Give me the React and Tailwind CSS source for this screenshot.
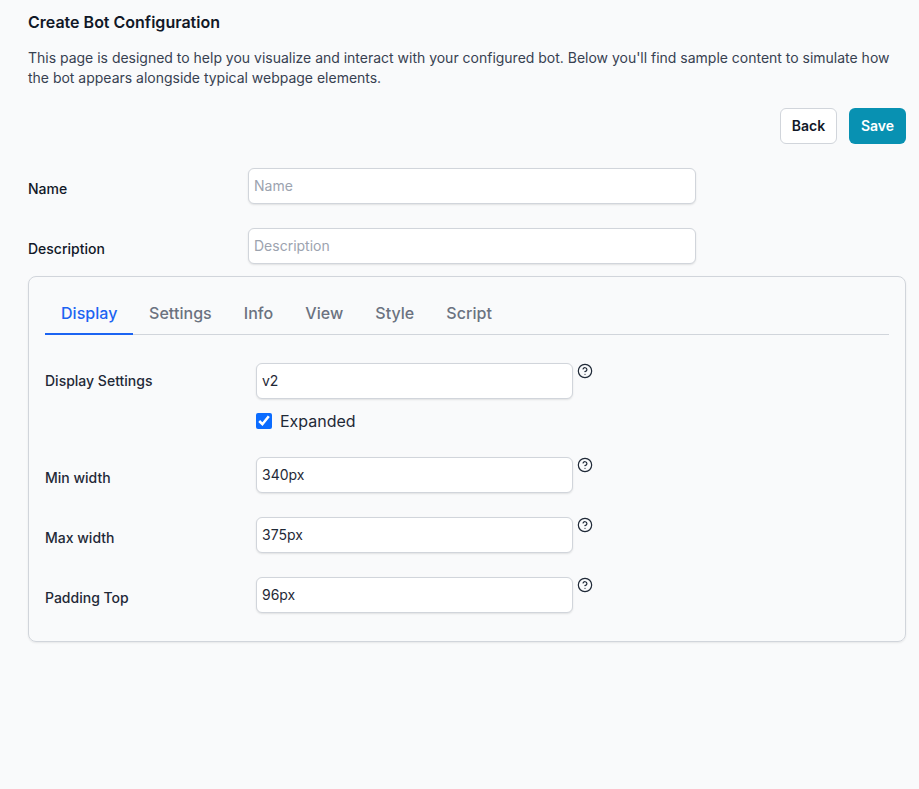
import React from "react";

function Help() {
  return (
    <svg className="ml-[4px] shrink-0 text-[#1f2937]" width="16" height="16" viewBox="0 0 24 24" fill="none" stroke="currentColor" strokeWidth="1.8" strokeLinecap="round" strokeLinejoin="round">
      <circle cx="12" cy="12" r="10" />
      <path d="M9.1 9a3 3 0 0 1 5.8 1c0 2-3 3-3 3" />
      <path d="M12 17h.01" />
    </svg>
  );
}

const inputCls = "block h-9 rounded-md border border-[#d1d5db] bg-white pl-[5px] pr-[5px] pb-[2px] text-sm text-[#1f2937] placeholder:text-[#9ca3af] shadow-[0_1px_2px_rgba(0,0,0,0.1)] outline-none";

function Row({ label, value, className = "", labelClass = "pt-[11px]", children }) {
  return (
    <div className={"flex items-start " + className}>
      <label className={"w-[211px] shrink-0 text-sm leading-5 font-medium text-[#1f2937] " + labelClass}>{label}</label>
      <div>
        <div className="flex items-start">
          <input className={inputCls + " w-[317px]"} defaultValue={value} />
          <Help />
        </div>
        {children}
      </div>
    </div>
  );
}

const tabs = ["Display", "Settings", "Info", "View", "Style", "Script"];

export default function App() {
  return (
    <div className="min-h-[789px] bg-[#f9fafb] pl-[28px] pr-[13px] pt-[12px] font-['Inter',sans-serif]">
      <h1 className="text-base leading-5 font-semibold text-[#111827]">Create Bot Configuration</h1>
      <p className="mt-[16px] text-sm leading-5 tracking-[-0.01px] text-[#374151]">
        This page is designed to help you visualize and interact with your configured bot. Below you'll find sample content to simulate how the bot appears alongside typical webpage elements.
      </p>
      <div className="mt-[20px] flex justify-end gap-3">
        <button className="h-9 w-[57px] rounded-md border border-[#d1d5db] bg-white text-sm font-semibold text-[#111827]">Back</button>
        <button className="h-9 w-[57px] rounded-md bg-[#0891b2] text-sm font-semibold text-white">Save</button>
      </div>
      <div className="mt-[24px] flex items-start">
        <label className="w-[220px] shrink-0 pt-[11px] text-sm leading-5 font-medium text-[#111827]">Name</label>
        <input className={inputCls + " w-[448px]"} placeholder="Name" />
      </div>
      <div className="mt-[24px] flex items-start">
        <label className="w-[220px] shrink-0 pt-[11px] text-sm leading-5 font-medium text-[#111827]">Description</label>
        <input className={inputCls + " w-[448px]"} placeholder="Description" />
      </div>
      <div className="mt-[12px] h-[366px] rounded-lg border border-[#d1d5db] px-4 pt-[16px] shadow-[0_1px_2px_rgba(0,0,0,0.08)]">
        <div className="flex border-b border-[#d1d5db]">
          {tabs.map((t, i) => (
            <div key={t} className={"-mb-px px-4 pt-[8px] pb-[8px] text-base leading-6 font-medium tracking-[0.05px] " + (i === 0 ? "border-b-2 border-[#1c64f2] text-[#1c64f2] w-[88px]" : "text-[#6b7280]")}>{t}</div>
          ))}
        </div>
        <Row label="Display Settings" value="v2" className="mt-[28px]" labelClass="pt-[8px]">
          <label className="mt-[10px] flex items-center text-base leading-6 text-[#1f2937]">
            <input type="checkbox" defaultChecked className="m-0 h-4 w-4 accent-[#0b6cff]" />
            <span className="ml-2">Expanded</span>
          </label>
        </Row>
        <Row label="Min width" value="340px" className="mt-[24px]" />
        <Row label="Max width" value="375px" className="mt-[24px]" />
        <Row label="Padding Top" value="96px" className="mt-[24px]" />
      </div>
    </div>
  );
}
